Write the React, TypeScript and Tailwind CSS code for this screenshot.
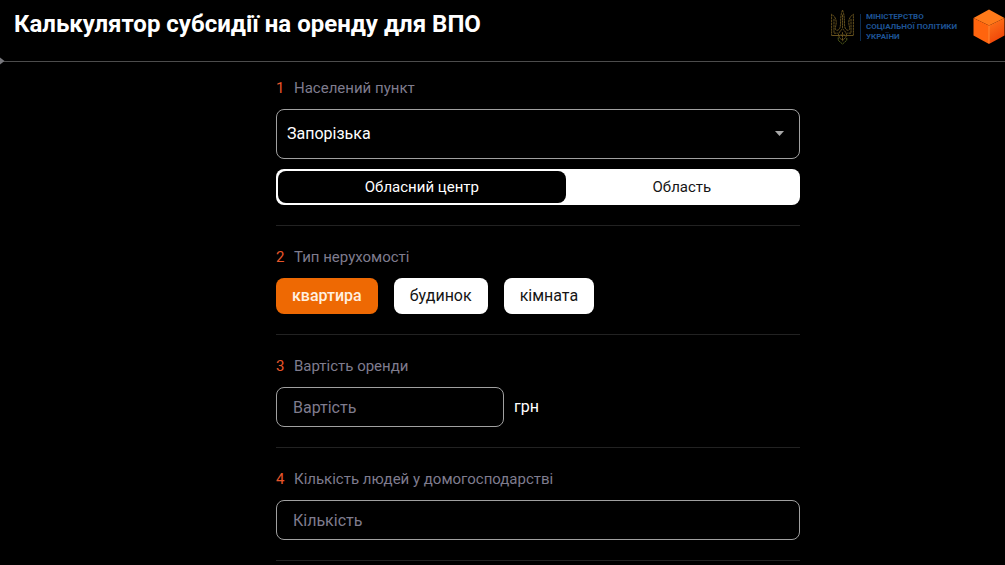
import React, { useState } from 'react';

const PROPERTY_TYPES = ['квартира', 'будинок', 'кімната'];

const REGIONS = ['Запорізька', 'Київська', 'Львівська', 'Одеська', 'Харківська'];

const Trident: React.FC = () => (
  <svg width="25" height="36" viewBox="0 0 26 38" fill="none" stroke="#6b5620" strokeWidth="1" strokeDasharray="2.500 0.500" aria-hidden="true">
    <path d="M1.500 5.500v22.500h7.300c.7 2.200 2.200 3.600 4.200 5.500 2-1.900 3.500-3.300 4.200-5.500h7.300V5.500c-3.200 2.100-4.900 5-4.900 8.600 0 2.700.9 4.600 1 6.300 0 1.400-.7 2.100-1.900 2.100-3-.4-3.500-3.800-3.600-6.500-.1-4.500-.2-8.300-1-11.500L13 1l-1.100 3.500c-.8 3.200-.9 7-1 11.500-.1 2.700-.6 6.100-3.600 6.500-1.200 0-1.900-.7-1.900-2.100.1-1.700 1-3.600 1-6.300 0-3.600-1.700-6.500-4.900-8.600z" />
    <path d="M4 10.500v15h4M22 10.500v15h-4M13 6v14M8.500 28.500c.2-3.500 1.800-5.200 4.500-7.500 2.700 2.300 4.300 4 4.500 7.500M13 24.500v9M10.500 27.500h5M2 28h22" />
    <path d="M8.500 30v3l4.500 4 4.500-4v-3" stroke="#55601c" />
  </svg>
);

const Cube: React.FC = () => (
  <svg width="32" height="36" viewBox="0 0 32 36" aria-hidden="true">
    <defs>
      <linearGradient id="cubeRight" x1="0" y1="0" x2="0.4" y2="1">
        <stop offset="0" stopColor="#ff7a1c" />
        <stop offset="1" stopColor="#f04408" />
      </linearGradient>
    </defs>
    <path d="M16 0.500L31.500 9 16 16.500 0.500 9z" fill="#ff7a1a" />
    <path d="M0.500 9L16 16.500V35L0.500 26.500z" fill="#ff640e" />
    <path d="M31.500 9L16 16.500V35l15.500-8.500z" fill="url(#cubeRight)" />
    <path d="M16 16.500V34" stroke="#ff8a35" strokeWidth="1" />
  </svg>
);

interface SectionProps {
  number: number;
  title: string;
  htmlFor?: string;
  children: React.ReactNode;
}

const Section: React.FC<SectionProps> = ({ number, title, htmlFor, children }) => {
  const heading = (
    <>
      <span className="w-[18px] text-[#e8562a]">{number}</span>
      <span className="text-[#7f7c8e]">{title}</span>
    </>
  );

  return (
    <section className="flex flex-col gap-[10px] border-b border-[#222222] py-5 first:pt-0">
      {htmlFor ? (
        <label htmlFor={htmlFor} className="flex text-[15px] leading-[22px]">{heading}</label>
      ) : (
        <h2 className="flex text-[15px] leading-[22px]">{heading}</h2>
      )}
      {children}
    </section>
  );
};

const App: React.FC = () => {
  const [region, setRegion] = useState('Запорізька');
  const [place, setPlace] = useState('center');
  const [propertyType, setPropertyType] = useState('квартира');
  const [rent, setRent] = useState('');
  const [people, setPeople] = useState('');

  const placeClass = (active: boolean) =>
    active ? 'bg-black text-white' : 'bg-white text-[#151515]';

  return (
    <div className="min-h-screen bg-black font-[Roboto,'Liberation_Sans',sans-serif] text-white">

      {/* Header */}
      <header className="relative flex items-start justify-between border-b border-[#4c4c4c] pb-4 pl-[14px]">
        <h1 className="pt-2 text-2xl font-bold leading-8">Калькулятор субсидії на оренду для ВПО</h1>
        <div className="flex items-center gap-4 pt-[9px]">
          <div className="flex items-center gap-[5px]">
            <Trident />
            <div className="h-[27px] border-l border-[#0c2c50]" />
            <p className="text-[8px] font-bold uppercase leading-[10px] text-[#1e5496]">
              Міністерство<br />соціальної політики<br />України
            </p>
          </div>
          <Cube />
        </div>
        <svg className="absolute -bottom-1 left-0" width="5" height="8" viewBox="0 0 5 8" aria-hidden="true">
          <path d="M0 0.500L4.500 4 0 7.500z" fill="#77777c" />
        </svg>
      </header>

      {/* Calculator form */}
      <main className="flex justify-center pl-[71px] pt-[15px]">
        <form className="w-full max-w-[524px]" onSubmit={e => e.preventDefault()}>

          <Section number={1} title="Населений пункт" htmlFor="region">
            <div className="relative">
              <select
                id="region"
                value={region}
                onChange={e => setRegion(e.target.value)}
                className="h-[50px] w-full appearance-none rounded-lg border border-[#a0a0a0] bg-black px-[10px] text-base text-white"
              >
                {REGIONS.map(name => <option key={name}>{name}</option>)}
              </select>
              <svg className="pointer-events-none absolute right-4 top-[22px]" width="9" height="5" viewBox="0 0 9 5" aria-hidden="true">
                <path d="M0 0h9L4.500 5z" fill="#a8a8a8" />
              </svg>
            </div>
            <div className="flex h-9 rounded-lg bg-white p-[2px] text-[15px]">
              <button
                type="button"
                onClick={() => setPlace('center')}
                className={`flex-auto rounded-lg ${placeClass(place === 'center')}`}
              >
                Обласний центр
              </button>
              <button
                type="button"
                onClick={() => setPlace('region')}
                className={`flex-auto rounded-lg ${placeClass(place === 'region')}`}
              >
                Область
              </button>
            </div>
          </Section>

          <Section number={2} title="Тип нерухомості">
            <div className="flex gap-4">
              {PROPERTY_TYPES.map(type => (
                <button
                  key={type}
                  type="button"
                  onClick={() => setPropertyType(type)}
                  className={`h-9 rounded-lg px-4 text-base ${propertyType === type ? 'bg-[#ee6903] font-medium text-[#fff0e0]' : 'bg-white text-[#151515]'}`}
                >
                  {type}
                </button>
              ))}
            </div>
          </Section>

          <Section number={3} title="Вартість оренди" htmlFor="rent">
            <div className="flex items-center gap-[10px]">
              <input
                id="rent"
                value={rent}
                onChange={e => setRent(e.target.value)}
                placeholder="Вартість"
                className="h-10 w-[228px] rounded-lg border border-[#a0a0a0] bg-black px-4 text-base placeholder:text-[#7f7c8e]"
              />
              <span className="text-base">грн</span>
            </div>
          </Section>

          <Section number={4} title="Кількість людей у домогосподарстві" htmlFor="people">
            <input
              id="people"
              value={people}
              onChange={e => setPeople(e.target.value)}
              placeholder="Кількість"
              className="h-10 w-full rounded-lg border border-[#a0a0a0] bg-black px-4 text-base placeholder:text-[#7f7c8e]"
            />
          </Section>

        </form>
      </main>
    </div>
  );
};

export default App;
